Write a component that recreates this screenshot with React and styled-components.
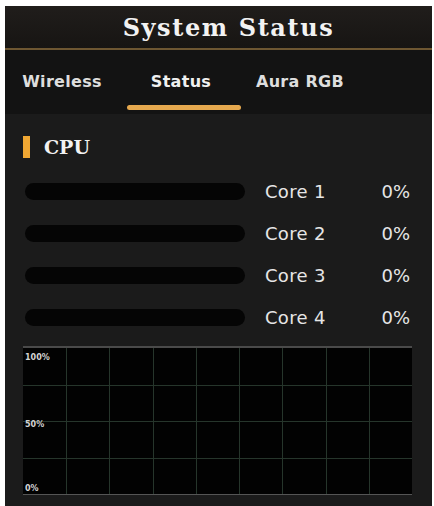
import React from "react";
import styled, { createGlobalStyle } from "styled-components";

const GlobalStyle = createGlobalStyle`
  html, body {
    margin: 0;
    padding: 0;
    background: #ffffff;
  }
  body {
    font-family: "DejaVu Sans", Verdana, sans-serif;
  }
`;

const Page = styled.div`
  padding: 6px 2px 0 5px;
  height: 506px;
  box-sizing: border-box;
  overflow: hidden;
`;

const Panel = styled.div`
  width: 427px;
  height: 500px;
  background: #1b1b1b;
  display: flex;
  flex-direction: column;
  overflow: hidden;
`;

const Header = styled.header`
  height: 42px;
  display: flex;
  align-items: center;
  justify-content: center;
  padding-left: 20px;
  background: linear-gradient(#201d1b, #171513);
  border-bottom: 2px solid #6e5732;
`;

const Title = styled.h1`
  margin: 0;
  font-family: "DejaVu Serif", "Liberation Serif", serif;
  font-weight: 700;
  font-size: 24px;
  letter-spacing: 1.6px;
  color: #f2f2f2;
  line-height: 1;
  padding-top: 2px;
`;

const TabBar = styled.nav`
  display: flex;
  gap: 5px;
  padding-left: 0;
  height: 64px;
  background: #131313;
`;

const Tab = styled.div`
  position: relative;
  width: 114px;
  padding-top: 22px;
  text-align: center;
  font-size: 16px;
  font-weight: 700;
  letter-spacing: 0.3px;
  line-height: 20px;
  color: ${(p) => (p.$active ? "#f0f0f0" : "#dedede")};

  &::after {
    content: "";
    display: ${(p) => (p.$active ? "block" : "none")};
    position: absolute;
    left: 3px;
    right: -3px;
    top: 55px;
    height: 5px;
    border-radius: 3px;
    background: #e5a84e;
  }
`;

const Content = styled.section`
  flex: 1;
  padding: 22px 22px 0 18px;
`;

const SectionTitle = styled.div`
  display: flex;
  align-items: center;
  gap: 14px;
  height: 22px;
  margin-bottom: 12px;
`;

const Marker = styled.span`
  width: 7px;
  height: 22px;
  background: #f0a733;
`;

const SectionLabel = styled.span`
  font-family: "DejaVu Serif", "Liberation Serif", serif;
  font-weight: 700;
  font-size: 19px;
  color: #f2f2f2;
  line-height: 1;
`;

const CoreRow = styled.div`
  display: grid;
  grid-template-columns: 220px 1fr auto;
  align-items: center;
  column-gap: 20px;
  height: 42px;
  padding-left: 2px;
`;

const Track = styled.div`
  height: 17px;
  border-radius: 9px;
  background: #050505;
  overflow: hidden;
`;

const Fill = styled.div`
  height: 100%;
  background: #e5a84e;
`;

const CoreName = styled.span`
  font-size: 18px;
  letter-spacing: 0.3px;
  color: #e6e6e6;
`;

const CoreValue = styled.span`
  font-size: 18px;
  color: #e6e6e6;
`;

const Chart = styled.div`
  position: relative;
  margin-top: 8px;
  width: 389px;
  height: 149px;
  background: #020202;
  border-top: 2px solid #4a4a4a;
  border-bottom: 1px solid #555555;
  box-sizing: border-box;
`;

const GridSvg = styled.svg`
  display: block;
  width: 100%;
  height: 100%;
`;

const AxisLabel = styled.span`
  position: absolute;
  left: 2px;
  top: ${(p) => p.$top}px;
  font-size: 8px;
  font-weight: 700;
  color: #d4d4d4;
  line-height: 10px;
`;

const cores = [
  { name: "Core 1", value: 0 },
  { name: "Core 2", value: 0 },
  { name: "Core 3", value: 0 },
  { name: "Core 4", value: 0 },
];

function UsageChart() {
  const w = 389;
  const h = 146;
  const cols = 9;
  const rows = 4;
  const vLines = Array.from({ length: cols - 1 }, (_, i) => Math.round(((i + 1) * w) / cols) + 0.5);
  const hLines = Array.from({ length: rows - 1 }, (_, i) => Math.round(((i + 1) * h) / rows) + 0.5);
  return (
    <Chart>
      <GridSvg viewBox={`0 0 ${w} ${h}`} preserveAspectRatio="none">
        {vLines.map((x) => (
          <line key={`v${x}`} x1={x} y1={0} x2={x} y2={h} stroke="#26352b" strokeWidth="1" />
        ))}
        {hLines.map((y) => (
          <line key={`h${y}`} x1={0} y1={y} x2={w} y2={y} stroke="#26352b" strokeWidth="1" />
        ))}
      </GridSvg>
      <AxisLabel $top={5}>100%</AxisLabel>
      <AxisLabel $top={72}>50%</AxisLabel>
      <AxisLabel $top={136}>0%</AxisLabel>
    </Chart>
  );
}

export default function App() {
  return (
    <>
      <GlobalStyle />
      <Page>
        <Panel>
          <Header>
            <Title>System Status</Title>
          </Header>
          <TabBar>
            <Tab>Wireless</Tab>
            <Tab $active>Status</Tab>
            <Tab>Aura RGB</Tab>
          </TabBar>
          <Content>
            <SectionTitle>
              <Marker />
              <SectionLabel>CPU</SectionLabel>
            </SectionTitle>
            {cores.map((c) => (
              <CoreRow key={c.name}>
                <Track>
                  <Fill style={{ width: `${c.value}%` }} />
                </Track>
                <CoreName>{c.name}</CoreName>
                <CoreValue>{c.value}%</CoreValue>
              </CoreRow>
            ))}
            <UsageChart />
          </Content>
        </Panel>
      </Page>
    </>
  );
}
